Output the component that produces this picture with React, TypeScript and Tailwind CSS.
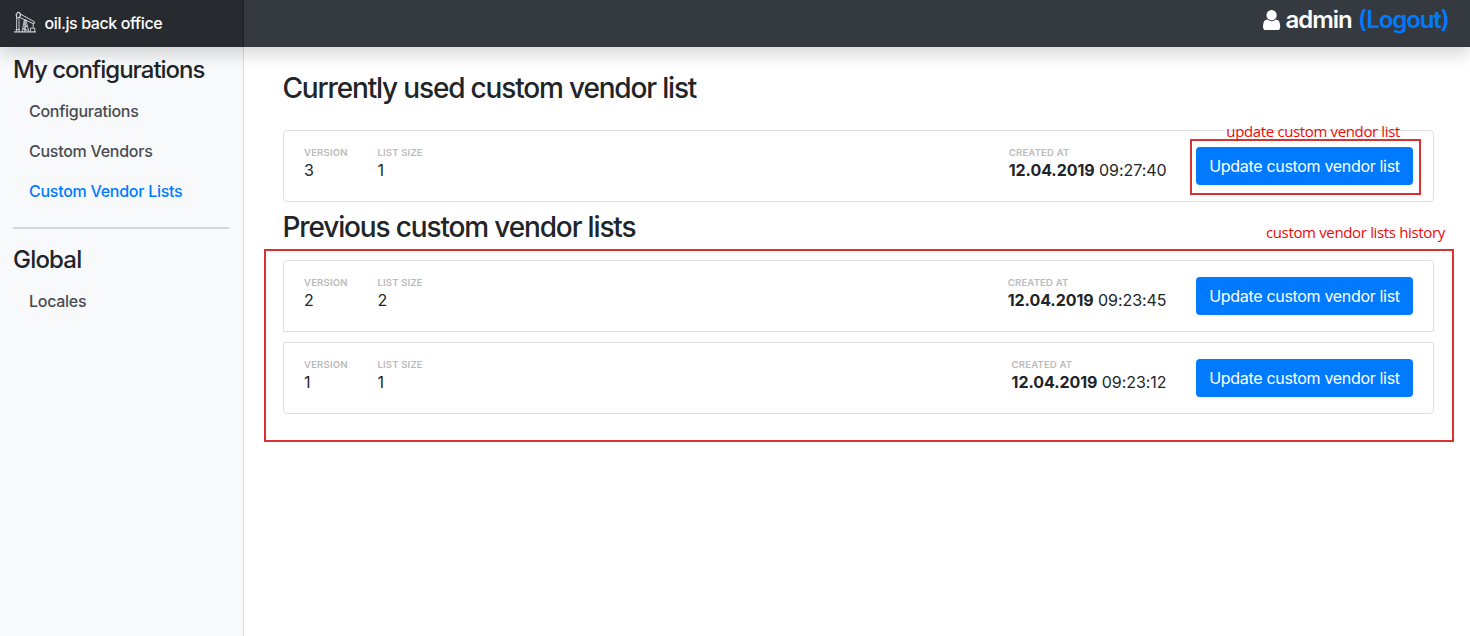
import React from "react";

type VendorList = {
  version: number;
  size: number;
  date: string;
  time: string;
};

const current: VendorList = { version: 3, size: 1, date: "12.04.2019", time: "09:27:40" };
const previous: VendorList[] = [
  { version: 2, size: 2, date: "12.04.2019", time: "09:23:45" },
  { version: 1, size: 1, date: "12.04.2019", time: "09:23:12" },
];

function PumpJackIcon() {
  return (
    <svg className="h-[24px] w-[24px]" viewBox="0 0 24 24" fill="none" stroke="#d6d8da" strokeWidth="1">
      <path d="M1 20.9h22" strokeWidth="1.2" />
      <path d="M3.2 3.6L5 1.2l1.8.7.6 2.6-1.6 2.6-2-.6z" strokeWidth="1.2" />
      <path d="M7 2.8l14.4 8-.4 2.2L6.2 6.2" />
      <path d="M3.6 7v13.6M6 8v12.6M2.6 18.6h4.4" strokeWidth=".9" />
      <path d="M11.4 8.4L9.2 20.6M12.6 8.4L15.8 20.6M10.8 12.4l3.2 2.8-4 2.6 4.8 1.6" strokeWidth=".9" />
      <path d="M12 9v11.6" strokeWidth="1.3" />
      <path d="M20.2 12.6v4.6M17.4 20.6v-3.4h4.4v3.4" strokeWidth=".9" />
    </svg>
  );
}

function UserIcon() {
  return (
    <svg className="h-[20.6px] w-[17.2px]" viewBox="256 128 1280 1536" fill="#fff">
      <path d="M1536 1399q0 109-62.5 187t-150.5 78h-854q-88 0-150.5-78t-62.5-187q0-85 8.5-160.5t31.5-152 58.5-131 94-89 134.5-34.5q131 128 313 128t313-128q76 0 134.5 34.5t94 89 58.5 131 31.5 152 8.5 160.5zm-256-887q0 159-112.5 271.5t-271.5 112.5-271.5-112.5-112.5-271.5 112.5-271.5 271.5-112.5 271.5 112.5 112.5 271.5z" />
    </svg>
  );
}

function Label({ children }: { children: React.ReactNode }) {
  return (
    <div className="h-[15px] text-[9.6px] leading-[15px] font-semibold tracking-[0.15px] text-[#bbb]">{children}</div>
  );
}

function ListCard({ item, shape, children }: { item: VendorList; shape: string; children?: React.ReactNode }) {
  return (
    <div className={`relative flex h-[72px] border border-[#dfdfdf] bg-white pt-[14px] pr-5 pl-5 ${shape}`}>
      <div className="w-[73.4px]">
        <Label>VERSION</Label>
        <div className="text-base leading-[20px]">{item.version}</div>
      </div>
      <div>
        <Label>LIST SIZE</Label>
        <div className="text-base leading-[20px]">{item.size}</div>
      </div>
      <div className="mr-[29.5px] ml-auto">
        <Label>CREATED AT</Label>
        <div className="text-base leading-[20px] tracking-[-0.06px]">
          <b className="font-bold">{item.date}</b> {item.time}
        </div>
      </div>
      <button className="mt-[2px] h-[38px] w-[217px] rounded-[4px] bg-[#007bff] text-base tracking-[-0.32px] whitespace-nowrap text-white">
        Update custom vendor list
      </button>
      {children}
    </div>
  );
}

function NavItem({ label, active }: { label: string; active?: boolean }) {
  return (
    <a className={`block h-10 pl-4 text-base leading-10 font-medium tracking-[-0.27px] ${active ? "text-[#007bff]" : "text-[#484c50]"}`}>
      {label}
    </a>
  );
}

export default function App() {
  return (
    <div className="flex h-[636px] w-[1470px] flex-col overflow-hidden bg-white font-['Inter','Liberation_Sans',sans-serif] text-[#212529]">
      <header className="relative z-10 flex h-[47px] shrink-0 bg-[#343a40] shadow-[0_8px_16px_rgba(0,0,0,0.15)]">
        <div className="flex w-[244px] items-center border-r border-[#1e2124] bg-[#272b30] pb-[2px] pl-[13px]">
          <PumpJackIcon />
          <span className="ml-[7.5px] text-base font-medium tracking-[-0.4px] text-white">oil.js back office</span>
        </div>
        <div className="mr-[21.5px] ml-auto flex h-[40px] items-center text-2xl font-semibold text-white">
          <UserIcon />
          <span className="ml-[5px] tracking-[-1.05px]">admin</span>
          <span className="ml-[6.5px] tracking-[-1.1px] text-[#007bff]">(Logout)</span>
        </div>
      </header>

      <div className="flex flex-1">
        <aside className="w-[244px] shrink-0 border-r border-[#dcddde] bg-[#f8f9fa] pr-[14px] pl-[13px]">
          <h4 className="mt-[8px] h-[36px] text-2xl leading-[29px] font-medium tracking-[-1px]">My configurations</h4>
          <NavItem label="Configurations" />
          <NavItem label="Custom Vendors" />
          <NavItem label="Custom Vendor Lists" active />
          <hr className="mt-[16px] h-[2px] border-0 bg-[#d4d5d6]" />
          <h4 className="mt-[16px] h-[36px] text-2xl leading-[29px] font-medium tracking-[-0.8px]">Global</h4>
          <NavItem label="Locales" />
        </aside>

        <main className="w-[1190px] pl-[39px]">
          <h3 className="-ml-[0.5px] mt-[24px] h-[59px] text-[28px] leading-[34px] font-medium tracking-[-1.17px]">
            Currently used custom vendor list
          </h3>
          <ListCard item={current} shape="rounded-[4px]">
            <div className="absolute top-[8px] right-[12px] h-[56px] w-[231px] border-2 border-[#d93232]" />
            <span className="absolute top-[-10px] right-[33px] font-['Open_Sans',sans-serif] text-[15px] leading-[20px] tracking-[-0.36px] whitespace-nowrap text-[#f00808]">
              update custom vendor list
            </span>
          </ListCard>
          <div className="relative mt-[8px] h-[50px]">
            <h3 className="-ml-[0.5px] text-[28px] leading-[34px] font-medium tracking-[-1.15px]">Previous custom vendor lists</h3>
            <span className="absolute top-[12px] right-[-11px] font-['Open_Sans',sans-serif] text-[15px] leading-[20px] tracking-[-0.34px] whitespace-nowrap text-[#f00808]">
              custom vendor lists history
            </span>
          </div>
          <section className="relative flex flex-col gap-[10px]">
            <ListCard item={previous[0]} shape="rounded-t-[4px]" />
            <ListCard item={previous[1]} shape="rounded-b-[4px]" />
            <div className="absolute top-[-11px] right-[-20px] left-[-19px] h-[193px] border-2 border-[#d93232]" />
          </section>
        </main>
      </div>
    </div>
  );
}
